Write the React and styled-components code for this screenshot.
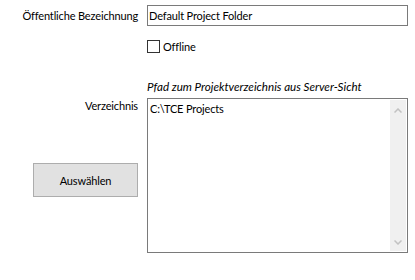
import React from "react";
import styled, { createGlobalStyle } from "styled-components";

const Global = createGlobalStyle`
  html, body { margin: 0; padding: 0; background: #ffffff; }
  body {
    font-family: Lato, "Noto Sans", sans-serif;
    font-size: 11px;
    letter-spacing: -0.15px;
    color: #000;
  }
`;

const Form = styled.div`
  width: 415px;
  height: 280px;
  display: grid;
  grid-template-columns: 138px 261px;
  column-gap: 9px;
  align-content: start;
  padding-top: 5px;
  box-sizing: border-box;
`;

const Label = styled.div`
  text-align: right;
  line-height: ${(p) => p.$lh || 21}px;
  white-space: nowrap;
  margin-top: ${(p) => p.$mt || 0}px;
`;

const TextInput = styled.div`
  height: 21px;
  box-sizing: border-box;
  border: 1px solid #7a7a7a;
  padding: 0 1px;
  line-height: 19px;
  white-space: nowrap;
`;

const CheckRow = styled.label`
  grid-column: 2;
  display: flex;
  align-items: center;
  gap: 3px;
  margin-top: 14px;
  height: 13px;
`;

const Box = styled.span`
  width: 13px;
  height: 13px;
  box-sizing: border-box;
  border: 1px solid #333333;
  background: #ffffff;
`;

const Hint = styled.div`
  grid-column: 2;
  font-style: italic;
  font-size: 11.6px;
  letter-spacing: 0;
  margin-top: 26px;
  line-height: 16px;
  white-space: nowrap;
`;

const LeftCol = styled.div`
  display: flex;
  flex-direction: column;
  align-items: flex-end;
`;

const Button = styled.div`
  width: 105px;
  height: 34px;
  box-sizing: border-box;
  margin-top: 49px;
  background: #e1e1e1;
  border: 1px solid #adadad;
  display: flex;
  align-items: center;
  justify-content: center;
`;

const Area = styled.div`
  height: 155px;
  margin-top: 3px;
  box-sizing: border-box;
  border: 1px solid #7a7a7a;
  display: flex;
  padding: 1px;
`;

const AreaText = styled.div`
  flex: 1;
  padding: 1px 1px;
  line-height: 16px;
`;

const Track = styled.div`
  width: 16px;
  background: #f0f0f0;
  display: flex;
  flex-direction: column;
  justify-content: space-between;
  align-items: center;
  padding: 8px 0 6px;
`;

const Chevron = ({ down }) => (
  <svg width="8" height="5" viewBox="0 0 8 5">
    <path
      d={down ? "M0.5 0.5 L4 4 L7.5 0.5" : "M0.5 4.5 L4 1 L7.5 4.5"}
      fill="none"
      stroke="#c2c2c2"
      strokeWidth="1.5"
    />
  </svg>
);

export default function App() {
  return (
    <>
      <Global />
      <Form>
        <Label>Öffentliche Bezeichnung</Label>
        <TextInput>Default Project Folder</TextInput>
        <CheckRow>
          <Box />
          <span>Offline</span>
        </CheckRow>
        <Hint>Pfad zum Projektverzeichnis aus Server-Sicht</Hint>
        <LeftCol>
          <Label $lh={16} $mt={3}>Verzeichnis</Label>
          <Button>Auswählen</Button>
        </LeftCol>
        <Area>
          <AreaText>C:\TCE Projects</AreaText>
          <Track>
            <Chevron />
            <Chevron down />
          </Track>
        </Area>
      </Form>
    </>
  );
}
